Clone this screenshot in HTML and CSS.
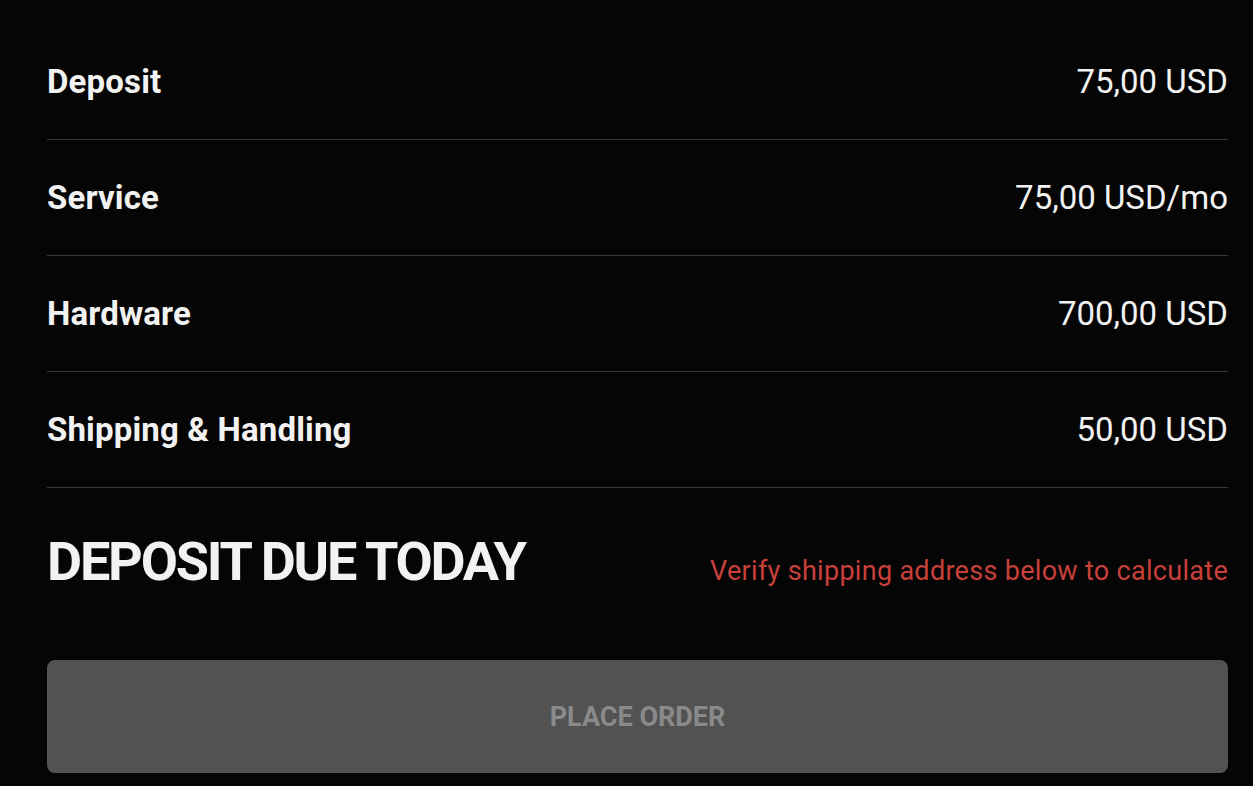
FILE: index.html
```html
<!DOCTYPE html>
<html>
<head>
<meta charset="utf-8">
<link rel="stylesheet" href="styles.css">
</head>
<body>
<div class="summary">
  <div class="row"><span class="label">Deposit</span><span class="value">75,00 USD</span></div>
  <div class="row"><span class="label">Service</span><span class="value">75,00 USD/mo</span></div>
  <div class="row"><span class="label">Hardware</span><span class="value">700,00 USD</span></div>
  <div class="row"><span class="label">Shipping &amp; Handling</span><span class="value">50,00 USD</span></div>
  <div class="due">
    <h2 class="due-title">DEPOSIT DUE TODAY</h2>
    <span class="due-note">Verify shipping address below to calculate</span>
  </div>
  <button class="place" disabled>PLACE ORDER</button>
</div>
</body>
</html>
```
FILE: styles.css
```css
html, body {
  margin: 0;
  padding: 0;
  background: #050505;
}
body {
  font-family: Roboto, "Liberation Sans", sans-serif;
  color: #f2f2f2;
}
.summary {
  padding: 24px 25px 0 47px;
  display: flex;
  flex-direction: column;
}
.row {
  height: 115px;
  border-bottom: 1px solid #3a3a3a;
  display: flex;
  align-items: center;
  justify-content: space-between;
}
.label {
  font-size: 33px;
  font-weight: 700;
  letter-spacing: 0.15px;
}
.value {
  font-size: 33px;
  font-weight: 400;
  letter-spacing: 0;
}
.due {
  display: flex;
  align-items: baseline;
  justify-content: space-between;
  padding-top: 44px;
  height: 172px;
  box-sizing: border-box;
}
.due-title {
  margin: 0;
  font-size: 54px;
  font-weight: 700;
  letter-spacing: -2.2px;
  line-height: 60px;
}
.due-note {
  color: #c8403a;
  font-size: 27px;
  letter-spacing: 0.3px;
}
.place {
  height: 113px;
  border: 0;
  border-radius: 8px;
  background: #525252;
  color: #8a8a8a;
  font-family: Roboto, "Liberation Sans", sans-serif;
  font-size: 27px;
  font-weight: 700;
  letter-spacing: 0;
}
```
